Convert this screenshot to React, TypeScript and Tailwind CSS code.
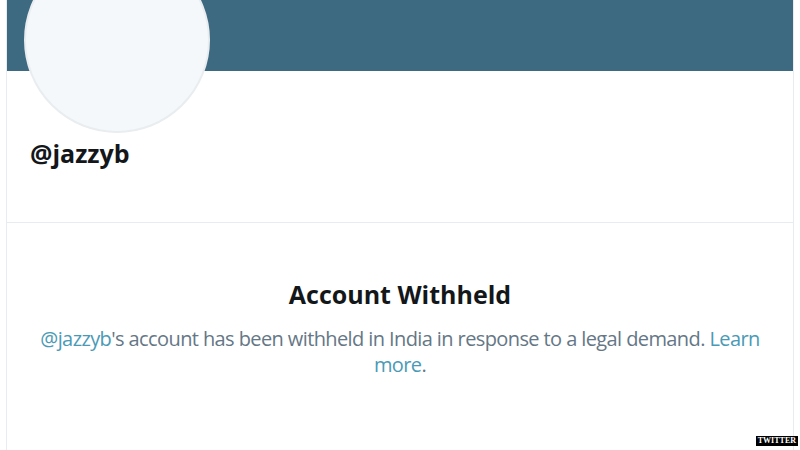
export default function App() {
  return (
    <div className="relative w-[800px] h-[450px] overflow-hidden bg-white" style={{ fontFamily: '"Open Sans", "Noto Sans", sans-serif' }}>
      <div className="mx-[6px] h-full border-x border-[#e6ecf0]">
        {/* Header banner */}
        <div className="h-[71px] bg-[#3d6a80]" />

        {/* Profile */}
        <div className="flex flex-col h-[152px] border-b border-[#e6ecf0] px-[17px]">
          <div className="-mt-[124px] w-[186px] h-[186px] shrink-0 rounded-full bg-[#f5f8fa] border-2 border-[#e9edf0]" />
          <div className="mt-[4px] pl-[6px] text-[25px] leading-[32px] font-bold text-[#14171a]">@jazzyb</div>
        </div>

        {/* Withheld notice */}
        <div className="pt-[56px] px-[30px] text-center">
          <h1 className="text-[25px] leading-[30px] font-bold text-[#14171a]">Account Withheld</h1>
          <p className="mt-[17px] text-[20px] leading-[26px] text-[#657786] tracking-[-0.6px]">
            <span className="text-[#4a9ab6]">@jazzyb</span>'s account has been withheld in India in response to a legal demand.{' '}
            <span className="text-[#4a9ab6]">Learn</span>{' '}
            <span className="text-[#4a9ab6]">more</span>.
          </p>
        </div>
      </div>

      <div className="absolute right-[2px] bottom-[4px] bg-black px-[2px] text-[8px] leading-[10px] font-bold text-white" style={{ fontFamily: '"Liberation Serif", serif' }}>
        TWITTER
      </div>
    </div>
  );
}
